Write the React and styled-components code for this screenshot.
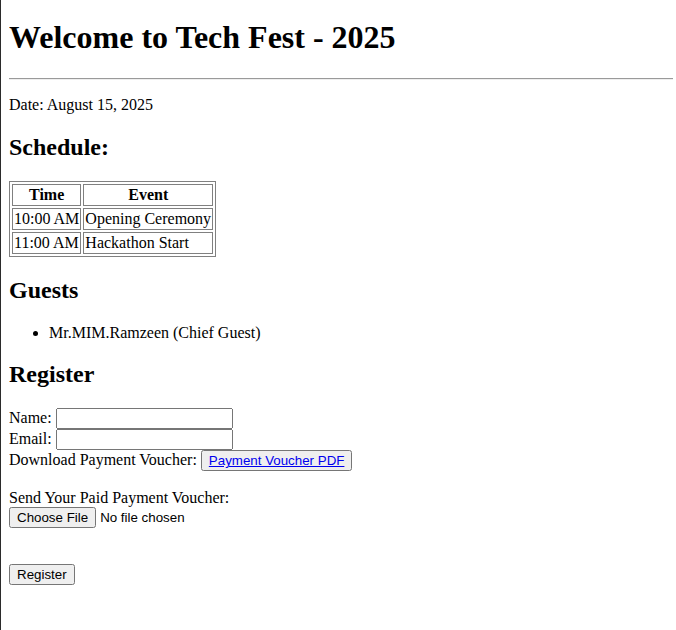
import React from 'react'
import styled, { createGlobalStyle } from 'styled-components'

const GlobalStyle = createGlobalStyle`
  html {
    min-height: 100%;
    border-left: 1px solid #2b2b2b;
    background: #fff;
  }
  body {
    margin: 8px 3px 8px 8px;
    font-family: 'Liberation Serif', 'Times New Roman', serif;
    font-size: 16px;
    color: #000;
  }
`

export default () => (
  <>
    <GlobalStyle />
    <Title>Welcome to Tech Fest - 2025</Title>
    <Rule />
    <Para>Date: August 15, 2025</Para>

    <Heading>Schedule:</Heading>
    <Schedule items={schedule} />

    <Heading>Guests</Heading>
    <GuestList>
      {guests.map(g => (
        <li key={g}>{g}</li>
      ))}
    </GuestList>

    <Heading>Register</Heading>
    <RegisterForm />
  </>
)

const Schedule = ({ items }) => (
  <Table>
    <thead>
      <tr>
        <Th>Time</Th>
        <Th>Event</Th>
      </tr>
    </thead>
    <tbody>
      {items.map(i => (
        <tr key={i.time}>
          <Td>{i.time}</Td>
          <Td>{i.event}</Td>
        </tr>
      ))}
    </tbody>
  </Table>
)

const RegisterForm = () => (
  <Form onSubmit={e => e.preventDefault()}>
    Name: <TextInput type="text" name="name" />
    <br />
    Email: <TextInput type="email" name="email" />
    <br />
    Download Payment Voucher:{' '}
    <Button type="button">
      <VoucherLink href="#voucher">Payment Voucher PDF</VoucherLink>
    </Button>
    <br />
    <br />
    Send Your Paid Payment Voucher:
    <br />
    <FileInput type="file" name="voucher" />
    <br />
    <br />
    <br />
    <Button type="submit">Register</Button>
  </Form>
)

const Title = styled.h1`
  font-size: 32px;
  font-weight: bold;
  margin: 11.44px 0 21.44px;
`

const Rule = styled.hr`
  margin: 8px 0;
  border: none;
  border-top: 1px solid #9a9a9a;
  border-bottom: 1px solid #eeeeee;
`

const Para = styled.p`
  margin: 16px 0;
`

const Heading = styled.h2`
  font-size: 24px;
  font-weight: bold;
  margin: 19.92px 0;
`

const Table = styled.table`
  border: 1px solid #808080;
  border-spacing: 2px;
  border-collapse: separate;
  font-size: 16px;
`

const Th = styled.th`
  border: 1px solid #808080;
  padding: 1px;
  font-weight: bold;
  text-align: center;
`

const Td = styled.td`
  border: 1px solid #808080;
  padding: 1px;
`

const GuestList = styled.ul`
  margin: 16px 0;
  padding-left: 40px;
  list-style: disc;
`

const Form = styled.form`
  margin: 0;
`

const TextInput = styled.input`
  box-sizing: border-box;
  width: 177px;
  height: 21px;
  font-family: 'Liberation Sans', Arial, sans-serif;
  font-size: 13.333px;
`

const FileInput = styled.input`
  font-family: 'Liberation Sans', Arial, sans-serif;
  font-size: 13.333px;
`

const Button = styled.button`
  font-family: 'Liberation Sans', Arial, sans-serif;
  font-size: 13.333px;
`

const VoucherLink = styled.a`
  color: #0000ee;
  text-decoration: underline;
`

const schedule = [
  { time: '10:00 AM', event: 'Opening Ceremony' },
  { time: '11:00 AM', event: 'Hackathon Start' },
]

const guests = ['Mr.MIM.Ramzeen (Chief Guest)']
